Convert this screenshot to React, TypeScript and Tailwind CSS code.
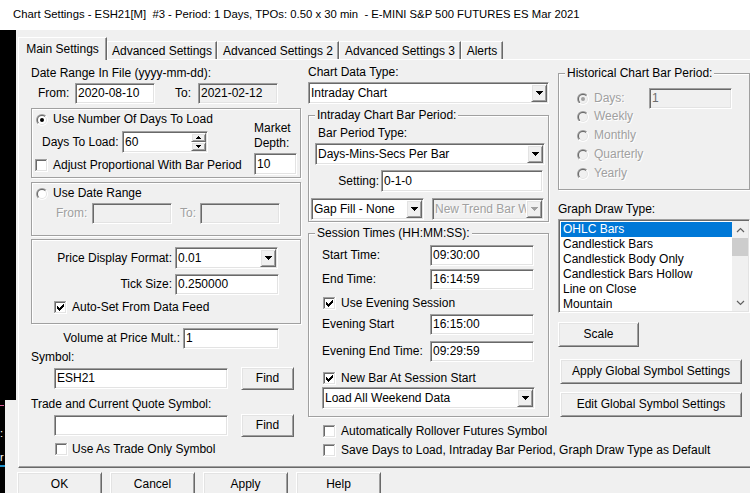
import React from "react";

const sunken =
  "border border-t-[#a0a0a0] border-l-[#a0a0a0] border-r-white border-b-white shadow-[inset_1px_1px_0_#696969,inset_-1px_-1px_0_#e3e3e3]";
const raised =
  "border border-t-white border-l-white border-r-[#696969] border-b-[#696969] shadow-[inset_1px_1px_0_#e3e3e3,inset_-1px_-1px_0_#a0a0a0]";
const etched = "border border-[#a0a0a0] shadow-[1px_1px_0_#fff,inset_1px_1px_0_#fff]";
const dis = "text-[#a0a0a0] [text-shadow:1px_1px_0_#fff]";

function Edit({ c, v = "", d = false, t = "" }: { c: string; v?: string; d?: boolean; t?: string }) {
  return (
    <div
      className={`${sunken} ${d ? "bg-[#f0f0f0]" : "bg-white"} flex items-center pl-[2px] whitespace-nowrap overflow-hidden shrink-0 ${t} ${c}`}
    >
      {v}
    </div>
  );
}

function DownArrow({ d = false }: { d?: boolean }) {
  return (
    <svg width="7" height="4" viewBox="0 0 7 4" shapeRendering="crispEdges">
      <path d="M0 0h7v1h-1v1h-1v1h-1v1h-1v-1h-1v-1h-1v-1h-1z" fill={d ? "#a0a0a0" : "#000"} />
    </svg>
  );
}

function Combo({ c, v, d = false }: { c: string; v: string; d?: boolean }) {
  return (
    <div className={`${sunken} ${d ? "bg-[#f0f0f0]" : "bg-white"} flex p-[1px] shrink-0 ${c}`}>
      <div className={`flex-1 min-w-0 flex items-center pl-[1px] whitespace-nowrap overflow-hidden ${d ? dis : ""}`}>
        {v}
      </div>
      <div className={`${raised} bg-[#f0f0f0] w-[16px] h-full flex items-center justify-center shrink-0`}>
        <DownArrow d={d} />
      </div>
    </div>
  );
}

function SpinEdit() {
  return (
    <div className={`${sunken} bg-white w-[86px] h-[22px] flex p-[1px] shrink-0`}>
      <div className="flex-1 flex items-center pl-[1px]">60</div>
      <div className="w-[15px] flex flex-col">
        <div className={`${raised} bg-[#f0f0f0] h-[9px] flex items-center justify-center`}>
          <svg width="5" height="3" viewBox="0 0 5 3" shapeRendering="crispEdges">
            <path d="M2 0h1v1h1v1h1v1H0V2h1V1h1z" fill="#000" />
          </svg>
        </div>
        <div className={`${raised} bg-[#f0f0f0] h-[9px] flex items-center justify-center`}>
          <svg width="5" height="3" viewBox="0 0 5 3" shapeRendering="crispEdges">
            <path d="M0 0h5v1H4v1H3v1H2V2H1V1H0z" fill="#000" />
          </svg>
        </div>
      </div>
    </div>
  );
}

function Radio({ on = false, d = false }: { on?: boolean; d?: boolean }) {
  return (
    <svg width="12" height="12" viewBox="0 0 12 12" className="shrink-0">
      <defs>
        <linearGradient id="rgo" x1="0" y1="0" x2="1" y2="1">
          <stop offset="0.5" stopColor="#a0a0a0" />
          <stop offset="0.5" stopColor="#ffffff" />
        </linearGradient>
        <linearGradient id="rgi" x1="0" y1="0" x2="1" y2="1">
          <stop offset="0.5" stopColor="#696969" />
          <stop offset="0.5" stopColor="#e3e3e3" />
        </linearGradient>
      </defs>
      <circle cx="6" cy="6" r="6" fill="url(#rgo)" />
      <circle cx="6" cy="6" r="5" fill="url(#rgi)" />
      <circle cx="6" cy="6" r="4" fill={d ? "#f0f0f0" : "#ffffff"} />
      {on && <circle cx="6" cy="6" r="2" fill={d ? "#a0a0a0" : "#000"} />}
    </svg>
  );
}

function Check({ on = false }: { on?: boolean }) {
  const cols = [
    [3, 5],
    [4, 6],
    [5, 7],
    [6, 6],
    [7, 5],
    [8, 4],
    [9, 3],
  ];
  return (
    <svg width="13" height="13" viewBox="0 0 13 13" shapeRendering="crispEdges" className="shrink-0">
      <rect x="0" y="0" width="13" height="13" fill="#fff" />
      <rect x="0" y="0" width="12" height="1" fill="#a0a0a0" />
      <rect x="0" y="0" width="1" height="12" fill="#a0a0a0" />
      <rect x="1" y="1" width="10" height="1" fill="#696969" />
      <rect x="1" y="1" width="1" height="10" fill="#696969" />
      <rect x="1" y="11" width="11" height="1" fill="#e3e3e3" />
      <rect x="11" y="1" width="1" height="11" fill="#e3e3e3" />
      {on && cols.map(([x, y]) => <rect key={x} x={x} y={y} width="1" height="3" fill="#000" />)}
    </svg>
  );
}

function Btn({ c, children }: { c: string; children: React.ReactNode }) {
  return (
    <div className={`${raised} bg-[#f0f0f0] flex items-center justify-center shrink-0 whitespace-nowrap ${c}`}>
      {children}
    </div>
  );
}

function Chevron({ up }: { up: boolean }) {
  return (
    <svg width="9" height="6" viewBox="0 0 9 6">
      <polyline
        points={up ? "1,5 4.5,1.5 8,5" : "1,1 4.5,4.5 8,1"}
        fill="none"
        stroke="#606060"
        strokeWidth="1.2"
      />
    </svg>
  );
}

const listItems = [
  "OHLC Bars",
  "Candlestick Bars",
  "Candlestick Body Only",
  "Candlestick Bars Hollow",
  "Line on Close",
  "Mountain",
];

const tab =
  "h-[18px] border-t border-l border-white border-r border-r-[#696969] shadow-[inset_-1px_0_0_#a0a0a0] flex justify-center pt-[2px] whitespace-nowrap";

export default function App() {
  return (
    <div className="w-[750px] h-[493px] overflow-hidden bg-[#f0f0f0] flex flex-col font-['Liberation_Sans',Arial,sans-serif] text-[12px] leading-[15px] text-black">
      <div className="h-[30px] shrink-0 bg-white flex items-center pl-[13px] pb-[1px] whitespace-pre text-[11.3px]">
        Chart Settings - ESH21[M]  #3 - Period: 1 Days, TPOs: 0.50 x 30 min  - E-MINI S&amp;P 500 FUTURES ES Mar 2021
      </div>
      <div className="flex-1 flex min-h-0">
        {/* chart window behind, visible at the left edge */}
        <div className="w-[16px] shrink-0 flex flex-col">
          <div className="h-[370px] bg-black shrink-0" />
          <div className="flex-1 w-[5px] bg-black flex flex-col overflow-hidden text-[11px] leading-[12px]">
            <div className="h-[5px] shrink-0" />
            <div className="h-[1px] w-[4px] bg-[#e0609a] shrink-0" />
            <div className="h-[21px] shrink-0" />
            <div className="text-white h-[12px] shrink-0">:</div>
            <div className="h-[12px] shrink-0" />
            <div className="text-white h-[12px] shrink-0">r</div>
            <div className="h-[2px] shrink-0" />
            <div className="h-[2px] w-[5px] bg-[#1e90c8] shrink-0" />
          </div>
        </div>

        <div className="flex-1 flex flex-col pl-[2px] pt-[7px] min-w-0 min-h-0">
          {/* Tabs */}
          <div className="h-[22px] flex items-end shrink-0">
            <div className="relative z-10 w-[89px] h-[23px] mb-[-1px] bg-[#f0f0f0] border-t border-l border-white border-r border-r-[#696969] shadow-[inset_-1px_0_0_#a0a0a0] flex justify-center pt-[4px] whitespace-nowrap">
              Main Settings
            </div>
            <div className={`w-[110px] ${tab}`}>Advanced Settings</div>
            <div className={`w-[122px] ${tab}`}>Advanced Settings 2</div>
            <div className={`w-[122px] ${tab}`}>Advanced Settings 3</div>
            <div className={`w-[42px] ${tab}`}>Alerts</div>
          </div>

          {/* Panel */}
          <div className="w-[740px] h-[409px] shrink-0 border-t border-l border-white border-b border-b-[#696969] shadow-[inset_0_-1px_0_#a0a0a0] flex pl-[12px]">
            {/* Column 1 */}
            <div className="w-[270px] shrink-0 flex flex-col">
              <div className="mt-[6px] h-[15px] whitespace-nowrap">Date Range In File (yyyy-mm-dd):</div>
              <div className="mt-[2px] h-[21px] flex items-center">
                <span className="ml-[7px] w-[37px]">From:</span>
                <Edit c="w-[80px] h-[21px]" v="2020-08-10" />
                <span className="ml-[20px] w-[23px]">To:</span>
                <Edit c="w-[80px] h-[21px]" v="2021-02-12" d />
              </div>

              <div className={`${etched} mt-[4px] h-[70px] flex shrink-0`}>
                <div className="flex-1 flex flex-col">
                  <div className="mt-[3px] h-[15px] flex items-center pl-[4px] gap-[5px] whitespace-nowrap">
                    <Radio on />
                    Use Number Of Days To Load
                  </div>
                  <div className="mt-[4px] h-[22px] flex items-center pl-[10px]">
                    <span className="w-[80px] whitespace-nowrap">Days To Load:</span>
                    <SpinEdit />
                  </div>
                  <div className="mt-[5px] h-[15px] flex items-center pl-[3px] gap-[5px] whitespace-nowrap">
                    <Check />
                    Adjust Proportional With Bar Period
                  </div>
                </div>
                <div className="w-[46px] shrink-0 flex flex-col">
                  <div className="mt-[12px] h-[15px]">Market</div>
                  <div className="h-[15px]">Depth:</div>
                  <Edit c="mt-[2px] w-[43px] h-[22px]" v="10" />
                </div>
              </div>

              <div className={`${etched} mt-[4px] h-[54px] flex flex-col shrink-0`}>
                <div className="mt-[3px] h-[15px] flex items-center pl-[4px] gap-[5px] whitespace-nowrap">
                  <Radio />
                  Use Date Range
                </div>
                <div className="mt-[2px] h-[21px] flex items-center">
                  <span className={`ml-[24px] w-[36px] ${dis}`}>From:</span>
                  <Edit c="w-[80px] h-[21px]" d />
                  <span className={`ml-[8px] w-[20px] ${dis}`}>To:</span>
                  <Edit c="w-[80px] h-[21px]" d />
                </div>
              </div>

              <div className={`${etched} mt-[3px] h-[85px] flex flex-col shrink-0`}>
                <div className="mt-[7px] h-[22px] flex items-center">
                  <span className="w-[143px] text-right pr-[3px] whitespace-nowrap">Price Display Format:</span>
                  <Combo c="w-[103px] h-[22px]" v="0.01" />
                </div>
                <div className="mt-[5px] h-[21px] flex items-center">
                  <span className="w-[143px] text-right pr-[3px] whitespace-nowrap">Tick Size:</span>
                  <Edit c="w-[104px] h-[21px]" v="0.250000" />
                </div>
                <div className="mt-[5px] h-[15px] flex items-center pl-[22px] gap-[5px] whitespace-nowrap">
                  <Check on />
                  Auto-Set From Data Feed
                </div>
              </div>

              <div className="mt-[4px] h-[21px] flex items-center">
                <span className="w-[152px] text-right pr-[3px] whitespace-nowrap">Volume at Price Mult.:</span>
                <Edit c="w-[96px] h-[21px]" v="1" />
              </div>
              <div className="mt-[1px] h-[15px]">Symbol:</div>
              <div className="mt-[2px] h-[23px] flex items-center">
                <Edit c="ml-[23px] w-[174px] h-[21px]" v="ESH21" />
                <Btn c="ml-[13px] w-[53px] h-[23px]">Find</Btn>
              </div>
              <div className="mt-[7px] h-[15px] whitespace-nowrap">Trade and Current Quote Symbol:</div>
              <div className="mt-[2px] h-[23px] flex items-center">
                <Edit c="ml-[23px] w-[174px] h-[21px]" />
                <Btn c="ml-[13px] w-[53px] h-[23px]">Find</Btn>
              </div>
              <div className="mt-[5px] h-[15px] flex items-center pl-[24px] gap-[4px] whitespace-nowrap">
                <Check />
                Use As Trade Only Symbol
              </div>
            </div>

            {/* Column 2 */}
            <div className="ml-[7px] w-[241px] shrink-0 flex flex-col">
              <div className="mt-[5px] h-[15px]">Chart Data Type:</div>
              <Combo c="mt-[2px] w-[241px] h-[22px]" v="Intraday Chart" />

              <fieldset className={`${etched} mt-[4px] h-[114px] pl-[6px] pr-[2px] flex flex-col shrink-0 min-w-0`}>
                <legend className="px-[2px] h-[15px] leading-[15px] bg-[#f0f0f0] whitespace-nowrap">
                  Intraday Chart Bar Period:
                </legend>
                <div className="mt-[3px] ml-[3px] h-[15px]">Bar Period Type:</div>
                <Combo c="mt-[2px] w-[230px] h-[22px]" v="Days-Mins-Secs Per Bar" />
                <div className="mt-[5px] h-[22px] flex items-center">
                  <span className="w-[66px] text-right pr-[2px]">Setting:</span>
                  <Edit c="w-[162px] h-[22px]" v="0-1-0" />
                </div>
                <div className="mt-[6px] h-[22px] flex items-center">
                  <Combo c="ml-[-4px] w-[113px] h-[22px]" v="Gap Fill - None" />
                  <Combo c="ml-[8px] w-[112px] h-[22px]" v="New Trend Bar Width" d />
                </div>
              </fieldset>

              <fieldset className={`${etched} mt-[4px] h-[191px] pl-[6px] pr-[2px] flex flex-col shrink-0 min-w-0`}>
                <legend className="px-[2px] h-[15px] leading-[15px] bg-[#f0f0f0] whitespace-nowrap">
                  Session Times (HH:MM:SS):
                </legend>
                <div className="mt-[4px] h-[21px] flex items-center">
                  <span className="ml-[7px] w-[108px]">Start Time:</span>
                  <Edit c="w-[104px] h-[21px]" v="09:30:00" />
                </div>
                <div className="mt-[3px] h-[21px] flex items-center">
                  <span className="ml-[7px] w-[108px]">End Time:</span>
                  <Edit c="w-[104px] h-[21px]" v="16:14:59" />
                </div>
                <div className="mt-[6px] h-[15px] flex items-center ml-[8px] gap-[5px] whitespace-nowrap">
                  <Check on />
                  Use Evening Session
                </div>
                <div className="mt-[3px] h-[21px] flex items-center">
                  <span className="ml-[7px] w-[108px]">Evening Start</span>
                  <Edit c="w-[104px] h-[21px]" v="16:15:00" />
                </div>
                <div className="mt-[6px] h-[21px] flex items-center">
                  <span className="ml-[7px] w-[108px] whitespace-nowrap">Evening End Time:</span>
                  <Edit c="w-[104px] h-[21px]" v="09:29:59" />
                </div>
                <div className="mt-[9px] h-[15px] flex items-center ml-[8px] gap-[5px] whitespace-nowrap">
                  <Check on />
                  New Bar At Session Start
                </div>
                <Combo c="mt-[1px] ml-[7px] w-[213px] h-[22px]" v="Load All Weekend Data" />
              </fieldset>

              <div className="mt-[7px] h-[15px] flex items-center ml-[15px] gap-[5px] whitespace-nowrap">
                <Check />
                Automatically Rollover Futures Symbol
              </div>
              <div className="mt-[4px] h-[15px] flex items-center ml-[15px] gap-[5px] whitespace-nowrap">
                <Check />
                Save Days to Load, Intraday Bar Period, Graph Draw Type as Default
              </div>
            </div>

            {/* Column 3 */}
            <div className="ml-[9px] w-[192px] shrink-0 flex flex-col">
              <fieldset className={`${etched} mt-[6px] h-[124px] pl-[6px] pr-[2px] flex flex-col shrink-0 min-w-0`}>
                <legend className="px-[2px] h-[15px] leading-[15px] bg-[#f0f0f0] whitespace-nowrap">
                  Historical Chart Bar Period:
                </legend>
                <div className="mt-[7px] h-[21px] flex items-center">
                  <span className="ml-[12px] mr-[5px] flex">
                    <Radio on d />
                  </span>
                  <span className={`w-[55px] ${dis}`}>Days:</span>
                  <Edit c="w-[83px] h-[21px]" v="1" d t="text-[#6d6d6d]" />
                </div>
                <div className="flex flex-col gap-[4px]">
                  {["Weekly", "Monthly", "Quarterly", "Yearly"].map((t) => (
                    <div key={t} className="h-[15px] flex items-center ml-[12px] gap-[5px]">
                      <Radio d />
                      <span className={dis}>{t}</span>
                    </div>
                  ))}
                </div>
              </fieldset>

              <div className="mt-[12px] h-[15px]">Graph Draw Type:</div>
              <div className={`${sunken} mt-[2px] w-[192px] h-[94px] bg-white flex p-[1px] shrink-0`}>
                <div className="flex-1 min-w-0 flex flex-col pt-[1px] pl-[1px]">
                  {listItems.map((t, i) => (
                    <div
                      key={t}
                      className={`h-[15px] leading-[15px] pl-[2px] whitespace-nowrap ${
                        i === 0 ? "bg-[#0078d7] text-white" : ""
                      }`}
                    >
                      {t}
                    </div>
                  ))}
                </div>
                <div className="w-[16px] bg-[#f0f0f0] flex flex-col shrink-0">
                  <div className="h-[17px] flex items-center justify-center">
                    <Chevron up />
                  </div>
                  <div className="h-[18px] bg-[#cdcdcd]" />
                  <div className="flex-1" />
                  <div className="h-[17px] flex items-center justify-center">
                    <Chevron up={false} />
                  </div>
                </div>
              </div>

              <Btn c="mt-[9px] w-[81px] h-[25px]">Scale</Btn>
              <Btn c="mt-[12px] ml-[2px] w-[182px] h-[25px]">Apply Global Symbol Settings</Btn>
              <Btn c="mt-[8px] ml-[2px] w-[182px] h-[25px]">Edit Global Symbol Settings</Btn>
            </div>
          </div>

          {/* Bottom buttons */}
          <div className="mt-[4px] ml-[-1px] flex gap-[8px] shrink-0">
            <Btn c="w-[85px] h-[24px]">OK</Btn>
            <Btn c="w-[85px] h-[24px]">Cancel</Btn>
            <Btn c="w-[85px] h-[24px]">Apply</Btn>
            <Btn c="w-[85px] h-[24px]">Help</Btn>
          </div>
        </div>
      </div>
    </div>
  );
}
